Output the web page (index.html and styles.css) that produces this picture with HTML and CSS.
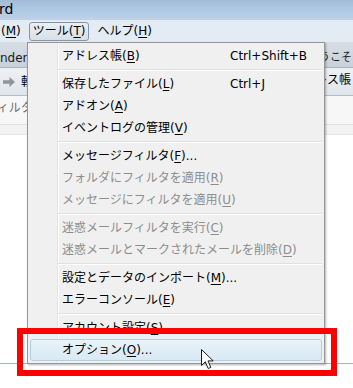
FILE: index.html
```html
<!DOCTYPE html>
<html lang="ja">
<head>
<meta charset="utf-8">
<title>Thunderbird ツール menu</title>
<link rel="stylesheet" href="styles.css">
</head>
<body>
<div class="app">
  <div class="titlebar"><span class="title">rd</span></div>
  <div class="menubar">
    <span class="mb-item mb-first">(<u>M</u>)</span>
    <span class="mb-item mb-open">ツール(<u>T</u>)</span>
    <span class="mb-item">ヘルプ(<u>H</u>)</span>
  </div>
  <div class="tabrow">
    <div class="tab-left">nderbird</div>
    <div class="tab-right">ようこそ</div>
  </div>
  <div class="toolrow">
    <div class="tool-left">
      <svg class="fwd" width="12" height="10" viewBox="0 0 12 10"><path d="M0 3.2h6.5V0L12 5l-5.5 5V6.8H0z" fill="#8e949a"/></svg>
      <span>転送</span>
    </div>
    <div class="tool-right">アドレス帳</div>
  </div>
  <div class="filterrow"><span class="filter-left">フィルタ</span></div>
  <div class="listhead"></div>
  <div class="list"></div>
  <div class="status"></div>
</div>

<div class="menu">
  <div class="item"><span>アドレス帳(<u>B</u>)</span><span>Ctrl+Shift+B</span></div>
  <div class="sep"></div>
  <div class="item"><span>保存したファイル(<u>L</u>)</span><span>Ctrl+J</span></div>
  <div class="item"><span>アドオン(<u>A</u>)</span></div>
  <div class="item"><span>イベントログの管理(<u>V</u>)</span></div>
  <div class="sep"></div>
  <div class="item"><span>メッセージフィルタ(<u>F</u>)...</span></div>
  <div class="item disabled"><span>フォルダにフィルタを適用(<u>R</u>)</span></div>
  <div class="item disabled"><span>メッセージにフィルタを適用(<u>U</u>)</span></div>
  <div class="sep"></div>
  <div class="item disabled"><span>迷惑メールフィルタを実行(<u>C</u>)</span></div>
  <div class="item disabled"><span>迷惑メールとマークされたメールを削除(<u>D</u>)</span></div>
  <div class="sep"></div>
  <div class="item"><span>設定とデータのインポート(<u>M</u>)...</span></div>
  <div class="item"><span>エラーコンソール(<u>E</u>)</span></div>
  <div class="sep"></div>
  <div class="item"><span>アカウント設定(<u>S</u>)</span></div>
  <div class="item active"><span>オプション(<u>O</u>)...</span></div>
</div>

<div class="callout"></div>

<svg class="cursor" width="14" height="22" viewBox="0 0 14 22">
  <path d="M0.5 0.5V16.5L4.3 12.8L7.2 19.5L9.8 18.4L7 11.9H12.2Z" fill="#fff" stroke="#10201f" stroke-width="1" stroke-linejoin="miter"/>
</svg>
</body>
</html>
```

FILE: styles.css
```css
html, body {
  margin: 0;
  padding: 0;
}

body {
  width: 353px;
  height: 388px;
  overflow: hidden;
  position: relative;
  background: #fff;
  font-family: "DejaVu Sans", "Noto Sans CJK JP", sans-serif;
  font-size: 12px;
  color: #000;
}

u {
  text-decoration: underline;
  text-underline-offset: 2px;
}

.app {
  display: flex;
  flex-direction: column;
  height: 388px;
}

.titlebar {
  height: 20px;
  flex: none;
  background: linear-gradient(#a2bcd8, #bed3ea);
  font-size: 14px;
  line-height: 19px;
  overflow: hidden;
}

.title {
  margin-left: -1px;
}

.menubar {
  height: 22px;
  flex: none;
  box-sizing: border-box;
  padding-top: 2px;
  display: flex;
  align-items: flex-start;
  gap: 4px;
  background: #e3ebf4;
}

.mb-item {
  height: 19px;
  box-sizing: border-box;
  padding: 0 3px;
  border: 1px solid transparent;
  border-radius: 3px;
  line-height: 17px;
  white-space: nowrap;
}

.mb-first {
  margin-left: -3px;
}

.mb-open {
  border-color: #8596a9;
  background: linear-gradient(#eaeff5, #d7dfe9);
}

.tabrow {
  height: 26px;
  flex: none;
  display: flex;
  justify-content: space-between;
  background: linear-gradient(#d8dee6, #c8d0da);
  border-bottom: 1px solid #a9b3bf;
  box-sizing: border-box;
  overflow: hidden;
}

.tab-left {
  width: 60px;
  padding-top: 6px;
  line-height: 20px;
  white-space: nowrap;
  color: #1a1a1a;
}

.tab-right {
  width: 45px;
  box-sizing: border-box;
  padding-top: 6px;
  line-height: 20px;
  font-size: 11px;
  white-space: nowrap;
  color: #1a1a1a;
}

.toolrow {
  height: 28px;
  flex: none;
  display: flex;
  justify-content: space-between;
  background: linear-gradient(#eef1f5, #e0e5eb);
  border-bottom: 1px solid #b3bcc7;
  box-sizing: border-box;
  overflow: hidden;
}

.tool-left {
  display: flex;
  align-items: center;
  gap: 6px;
  padding-left: 3px;
  height: 25px;
  white-space: nowrap;
}

.fwd {
  margin-top: 3px;
}

.tool-right {
  width: 62px;
  line-height: 25px;
  white-space: nowrap;
}

.filterrow {
  height: 29px;
  flex: none;
  box-sizing: border-box;
  background: #f7f7f7;
  border-bottom: 1px solid #e2e2e2;
  overflow: hidden;
}

.filter-left {
  display: block;
  margin-left: -15px;
  line-height: 24px;
  color: #6f6f6f;
  white-space: nowrap;
}

.listhead {
  height: 10px;
  flex: none;
  box-sizing: border-box;
  background: #f3f3f3;
  border-bottom: 1px solid #e6e6e6;
}

.list {
  flex: none;
  height: 228px;
  background: #fff;
}

.status {
  flex: 1;
  border-top: 1px solid #a2b4c7;
  background: #fff;
}

/* Drop-down menu (overlay) */
.menu {
  position: absolute;
  left: 27px;
  top: 42px;
  width: 298px;
  box-sizing: border-box;
  border: 1px solid #979797;
  padding: 2px;
  background:
    linear-gradient(to right, transparent 29px, #e2e3e3 29px, #e2e3e3 30px, #fff 30px, #fff 31px, transparent 31px),
    #f0f0f0;
  box-shadow: 1px 1px 2px rgba(0, 0, 0, 0.3);
}

.item {
  display: grid;
  grid-template-columns: 168px auto;
  height: 22px;
  box-sizing: border-box;
  border: 1px solid transparent;
  border-radius: 3px;
  padding-left: 31px;
  line-height: 20px;
  white-space: nowrap;
}

.item.disabled {
  color: #8d8d8d;
}

.item.active {
  border-color: #a6d3ec;
  background: linear-gradient(#e9f3f9, #d9e9f4);
}

.sep {
  height: 2px;
  margin: 2px 0 2px 28px;
  box-sizing: border-box;
  border-top: 1px solid #e0e0e0;
  border-bottom: 1px solid #fff;
}

/* Annotation overlay */
.callout {
  position: absolute;
  left: 17px;
  top: 328px;
  width: 320px;
  height: 48px;
  box-sizing: border-box;
  border: 6px solid #ff0000;
}

.cursor {
  position: absolute;
  left: 201px;
  top: 349px;
}
```
